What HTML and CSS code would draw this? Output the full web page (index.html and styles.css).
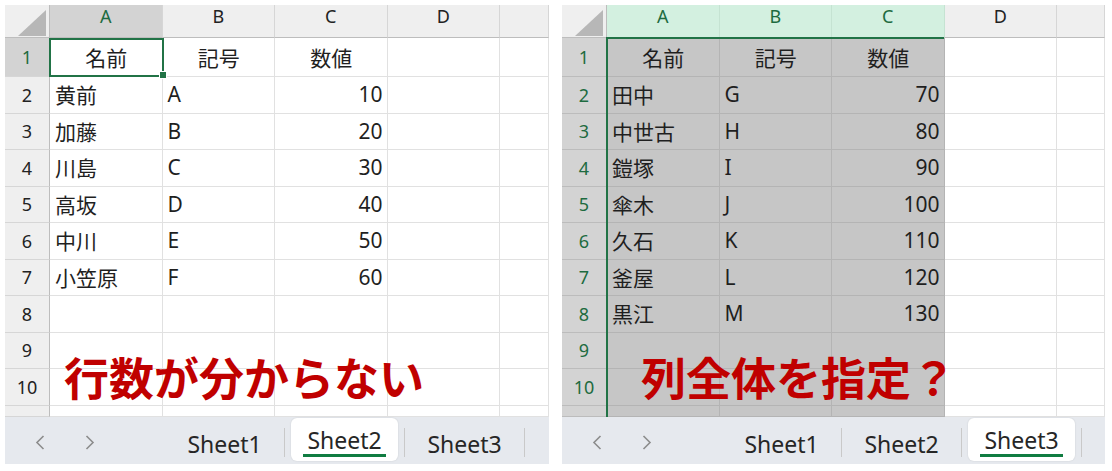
FILE: index.html
```html
<!DOCTYPE html>
<html lang="ja">
<head>
<meta charset="utf-8">
<title>Sheets</title>
<link rel="stylesheet" href="styles.css">
</head>
<body>
<div class="page">
  <div class="panel">
    <div class="sheet">
      <div class="corner"><svg width="28" height="26" viewBox="0 0 28 26"><polygon points="28,0 28,26 0,26" fill="#b7b7b7"/></svg></div>
      <div class="ch sel">A</div><div class="ch">B</div><div class="ch">C</div><div class="ch">D</div><div class="ch"></div>

      <div class="rh sel">1</div><div class="c h active">名前</div><div class="c h">記号</div><div class="c h">数値</div><div class="c"></div><div class="c"></div>
      <div class="rh">2</div><div class="c">黄前</div><div class="c">A</div><div class="c n">10</div><div class="c"></div><div class="c"></div>
      <div class="rh">3</div><div class="c">加藤</div><div class="c">B</div><div class="c n">20</div><div class="c"></div><div class="c"></div>
      <div class="rh">4</div><div class="c">川島</div><div class="c">C</div><div class="c n">30</div><div class="c"></div><div class="c"></div>
      <div class="rh">5</div><div class="c">高坂</div><div class="c">D</div><div class="c n">40</div><div class="c"></div><div class="c"></div>
      <div class="rh">6</div><div class="c">中川</div><div class="c">E</div><div class="c n">50</div><div class="c"></div><div class="c"></div>
      <div class="rh">7</div><div class="c">小笠原</div><div class="c">F</div><div class="c n">60</div><div class="c"></div><div class="c"></div>
      <div class="rh">8</div><div class="c"></div><div class="c"></div><div class="c"></div><div class="c"></div><div class="c"></div>
      <div class="rh">9</div><div class="c"></div><div class="c"></div><div class="c"></div><div class="c"></div><div class="c"></div>
      <div class="rh">10</div><div class="c"></div><div class="c"></div><div class="c"></div><div class="c"></div><div class="c"></div>
      <div class="rh"></div><div class="c"></div><div class="c"></div><div class="c"></div><div class="c"></div><div class="c"></div>
    </div>
    <div class="note note-left">行数が分からない</div>
    <div class="tabbar">
      <div class="nav">
        <svg width="10" height="15" viewBox="0 0 10 15"><polyline points="8.5,1 2,7.5 8.5,14" fill="none" stroke="#8c8c8c" stroke-width="1.6"/></svg>
        <svg width="10" height="15" viewBox="0 0 10 15"><polyline points="1.5,1 8,7.5 1.5,14" fill="none" stroke="#8c8c8c" stroke-width="1.6"/></svg>
      </div>
      <div class="tab"><div class="lbl"><span class="txt">Sheet1</span></div></div><div class="sep"></div>
      <div class="tab active"><div class="lbl"><span class="txt">Sheet2</span></div></div><div class="sep"></div>
      <div class="tab"><div class="lbl"><span class="txt">Sheet3</span></div></div><div class="sep"></div>
    </div>
  </div>

  <div class="panel right">
    <div class="sheet">
      <div class="corner"><svg width="28" height="26" viewBox="0 0 28 26"><polygon points="28,0 28,26 0,26" fill="#b7b7b7"/></svg></div>
      <div class="ch chs">A</div><div class="ch chs">B</div><div class="ch chs">C</div><div class="ch">D</div><div class="ch"></div>

      <div class="rh rs">1</div><div class="c h s">名前</div><div class="c h s">記号</div><div class="c h s">数値</div><div class="c"></div><div class="c"></div>
      <div class="rh rs">2</div><div class="c s">田中</div><div class="c s">G</div><div class="c n s">70</div><div class="c"></div><div class="c"></div>
      <div class="rh rs">3</div><div class="c s">中世古</div><div class="c s">H</div><div class="c n s">80</div><div class="c"></div><div class="c"></div>
      <div class="rh rs">4</div><div class="c s">鎧塚</div><div class="c s">I</div><div class="c n s">90</div><div class="c"></div><div class="c"></div>
      <div class="rh rs">5</div><div class="c s">傘木</div><div class="c s">J</div><div class="c n s">100</div><div class="c"></div><div class="c"></div>
      <div class="rh rs">6</div><div class="c s">久石</div><div class="c s">K</div><div class="c n s">110</div><div class="c"></div><div class="c"></div>
      <div class="rh rs">7</div><div class="c s">釜屋</div><div class="c s">L</div><div class="c n s">120</div><div class="c"></div><div class="c"></div>
      <div class="rh rs">8</div><div class="c s">黒江</div><div class="c s">M</div><div class="c n s">130</div><div class="c"></div><div class="c"></div>
      <div class="rh rs">9</div><div class="c s"></div><div class="c s"></div><div class="c s"></div><div class="c"></div><div class="c"></div>
      <div class="rh rs">10</div><div class="c s"></div><div class="c s"></div><div class="c s"></div><div class="c"></div><div class="c"></div>
      <div class="rh rs"></div><div class="c s"></div><div class="c s"></div><div class="c s"></div><div class="c"></div><div class="c"></div>
    </div>
    <div class="selbox"></div>
    <div class="note note-right">列全体を指定？</div>
    <div class="tabbar">
      <div class="nav">
        <svg width="10" height="15" viewBox="0 0 10 15"><polyline points="8.5,1 2,7.5 8.5,14" fill="none" stroke="#8c8c8c" stroke-width="1.6"/></svg>
        <svg width="10" height="15" viewBox="0 0 10 15"><polyline points="1.5,1 8,7.5 1.5,14" fill="none" stroke="#8c8c8c" stroke-width="1.6"/></svg>
      </div>
      <div class="tab"><div class="lbl"><span class="txt">Sheet1</span></div></div><div class="sep"></div>
      <div class="tab"><div class="lbl"><span class="txt">Sheet2</span></div></div><div class="sep"></div>
      <div class="tab active"><div class="lbl"><span class="txt">Sheet3</span></div></div><div class="sep"></div>
    </div>
  </div>
</div>
</body>
</html>
```

FILE: styles.css
```css
* { box-sizing: border-box; }

body {
  margin: 0;
  background: #ffffff;
  font-family: "Noto Sans", "Noto Sans CJK JP", sans-serif;
  color: #1f1f1f;
}

.page {
  display: flex;
  gap: 13px;
  padding: 5px 0 0 5px;
}

.panel {
  position: relative;
  width: 544px;
  height: 459px;
  display: flex;
  flex-direction: column;
}

.panel.right { width: 543px; }

.sheet {
  display: grid;
  grid-template-columns: 45px 112.5px 112.5px 112.5px 112.5px 1fr;
  grid-template-rows: 33px 39px repeat(9, 36.5px) 1fr;
  height: 412px;
  overflow: hidden;
}

.corner {
  background: #efefef;
  border-right: 1px solid #bdbdbd;
  border-bottom: 1px solid #bdbdbd;
  display: flex;
  align-items: flex-end;
  justify-content: flex-end;
  padding: 0 3px 1px 0;
}

.ch {
  background: #efefef;
  border-right: 1px solid #d6d6d6;
  border-bottom: 1px solid #bdbdbd;
  display: flex;
  justify-content: center;
  align-items: flex-start;
  padding-top: 1px;
  font-size: 18px;
  line-height: 20px;
  color: #222222;
}

.rh {
  background: #efefef;
  border-right: 1px solid #bdbdbd;
  border-bottom: 1px solid #d6d6d6;
  display: flex;
  justify-content: center;
  align-items: center;
  font-size: 18px;
  line-height: 20px;
  color: #222222;
}

.ch.sel, .rh.sel {
  background: #d3d3d3;
  color: #1d6b40;
}

.chs {
  background: #d3f0e0;
  color: #1d6b40;
  border-right-color: #c5e3d2;
}

.rs {
  background: #d3d3d3;
  color: #1d6b40;
  border-bottom-color: #bcbcbc;
}

.c {
  border-right: 1px solid #e1e1e1;
  border-bottom: 1px solid #e1e1e1;
  display: flex;
  align-items: center;
  padding: 0 4px 1px 5px;
  font-size: 21px;
  white-space: nowrap;
  color: #1f1f1f;
}

.c.n { justify-content: flex-end; }
.c.h { justify-content: center; }

.c.s {
  background: #c6c6c6;
  border-right-color: #b4b4b4;
  border-bottom-color: #b4b4b4;
}

.c.active {
  position: relative;
  z-index: 2;
}

.c.active::before {
  content: "";
  position: absolute;
  left: -1px;
  top: 0;
  right: -2px;
  bottom: -1px;
  border: 2px solid #217346;
}

.c.active::after {
  content: "";
  position: absolute;
  right: -4px;
  bottom: -2px;
  width: 6px;
  height: 6px;
  background: #217346;
  box-shadow: 0 0 0 1px #ffffff;
}

.selbox {
  position: absolute;
  left: 44px;
  top: 32px;
  width: 338px;
  height: 380px;
  border-left: 2px solid #217346;
  border-top: 2px solid #217346;
  pointer-events: none;
}

.note {
  position: absolute;
  top: 349px;
  font-family: "Noto Sans CJK JP", sans-serif;
  font-weight: 700;
  font-size: 45px;
  line-height: 1;
  color: #c00000;
  white-space: nowrap;
}

.note-left { left: 59px; }
.note-right { left: 79px; }

.tabbar {
  height: 47px;
  background: #e6e9ee;
  display: flex;
}

.nav {
  width: 160px;
  display: flex;
  align-items: center;
  gap: 40px;
  padding: 3px 0 0 30px;
}

.tab {
  width: 119px;
  padding: 1px 6px 3px;
  display: flex;
}

.lbl {
  flex: 1;
  display: flex;
  justify-content: center;
  align-items: flex-start;
  border-radius: 6px;
}

.tab.active .lbl {
  background: #ffffff;
  box-shadow: 0 0 2px rgba(0, 0, 0, 0.12);
}

.txt {
  font-family: "Noto Sans", sans-serif;
  font-size: 23px;
  line-height: 28px;
  margin-top: 12px;
  color: #262626;
}

.tab.active .txt {
  margin-top: 8px;
  padding: 0 4px;
  border-bottom: 3px solid #107c41;
}

.sep {
  width: 1px;
  height: 29px;
  margin-top: 11px;
  background: #c9c9c9;
}
```
